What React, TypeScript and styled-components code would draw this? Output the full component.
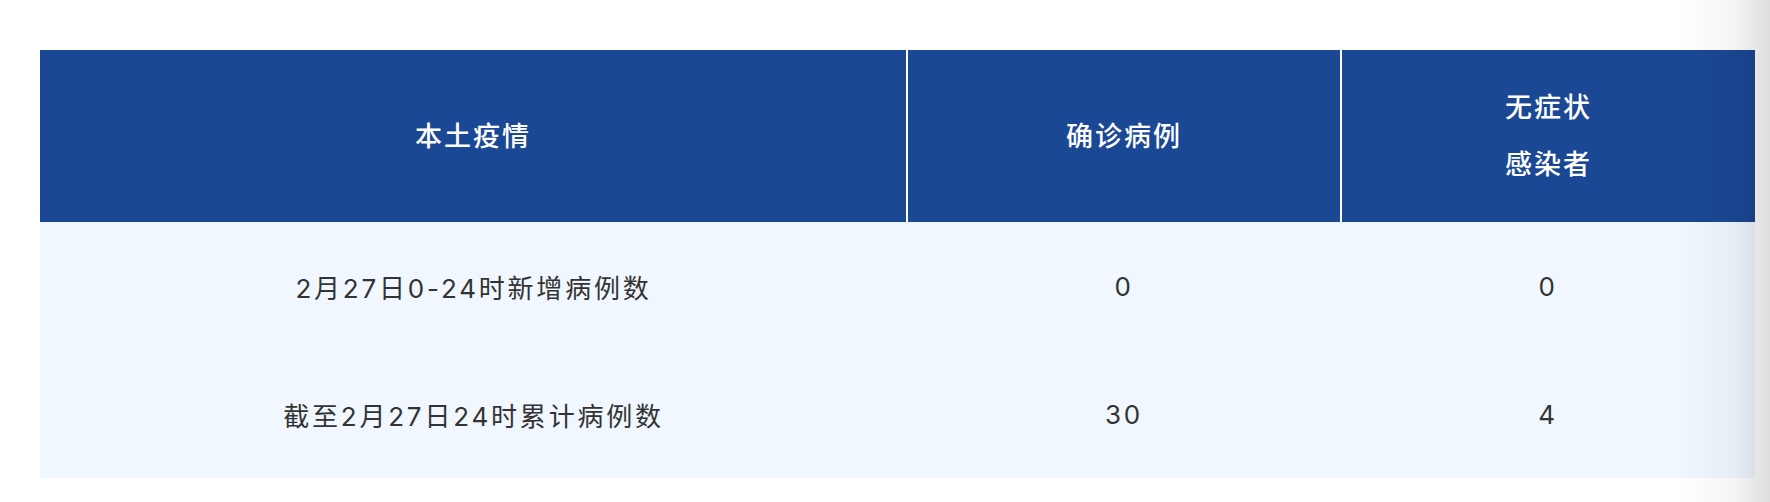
import styled, {createGlobalStyle} from 'styled-components';

const blue = '#1b4895';
const paleBlue = '#f0f7fe';
const white = '#fff';
const textGray = '#333';

const GlobalStyle = createGlobalStyle`
  html, body {
    margin: 0;
    padding: 0;
    background: ${white};
  }

  body {
    font-family: Inter, "Noto Sans CJK SC", "Noto Sans", sans-serif;
  }
`;

type Row = {label: string; confirmed: number; asymptomatic: number};

const rows: Row[] = [
  {label: '2月27日0-24时新增病例数', confirmed: 0, asymptomatic: 0},
  {label: '截至2月27日24时累计病例数', confirmed: 30, asymptomatic: 4},
];

export default function App() {
  return (
    <>
      <GlobalStyle/>
      <Page>
        <Table>
          <colgroup>
            <col style={{width: 867}}/>
            <col style={{width: 434}}/>
            <col/>
          </colgroup>
          <thead>
            <tr>
              <HeadCell>本土疫情</HeadCell>
              <HeadCell>确诊病例</HeadCell>
              <HeadCell>无症状<br/>感染者</HeadCell>
            </tr>
          </thead>
          <tbody>
            {rows.map(row => (
              <tr key={row.label}>
                <BodyCell>{row.label}</BodyCell>
                <BodyCell>{row.confirmed}</BodyCell>
                <BodyCell>{row.asymptomatic}</BodyCell>
              </tr>
            ))}
          </tbody>
        </Table>
        <EdgeShadow/>
      </Page>
    </>
  );
}

const Page = styled.div`
  padding: 50px 15px 24px 40px;
`;

const Table = styled.table`
  width: 1715px;
  border-collapse: collapse;
  table-layout: fixed;
`;

const HeadCell = styled.th`
  height: 172px;
  padding: 0;
  background: ${blue};
  color: ${white};
  font-size: 27px;
  font-weight: 500;
  line-height: 57px;
  letter-spacing: 2px;
  text-align: center;
  border-left: 2px solid ${white};

  &:first-child {
    border-left: 0;
  }
`;

const BodyCell = styled.td`
  height: 128px;
  padding: 0;
  background: ${paleBlue};
  color: ${textGray};
  font-size: 26px;
  letter-spacing: 2.8px;
  text-align: center;
`;

const EdgeShadow = styled.div`
  position: fixed;
  top: 0;
  right: 0;
  width: 90px;
  height: 100%;
  pointer-events: none;
  background: linear-gradient(to right, rgba(0, 0, 0, 0), rgba(0, 0, 0, 0.04) 60%, rgba(0, 0, 0, 0.13));
`;
